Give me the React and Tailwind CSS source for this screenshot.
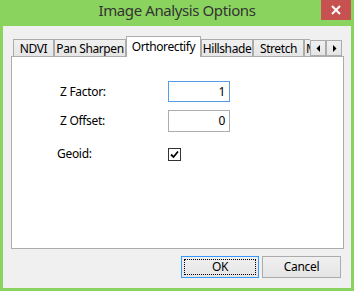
import React from "react";

const font = { fontFamily: '"Noto Sans", "Open Sans", sans-serif' };

function Tab({ label, w, selected, left }) {
  if (selected) {
    return (
      <div
        className="relative z-10 flex h-[21px] shrink-0 items-start justify-center border border-b-0 border-[#acacac] bg-white pt-[1px] text-[12px] tracking-[-0.4px] text-black"
        style={{ width: w }}
      >
        {label}
      </div>
    );
  }
  return (
    <div
      className={
        left
          ? "flex h-[18px] shrink-0 items-center justify-start overflow-hidden whitespace-nowrap border border-b-0 border-[#acacac] bg-gradient-to-b from-[#f0f0f0] to-[#e5e5e5] pl-[1px] text-[12px] tracking-[-0.4px] text-black"
          : "flex h-[18px] shrink-0 items-center justify-center overflow-hidden whitespace-nowrap border border-b-0 border-[#acacac] bg-gradient-to-b from-[#f0f0f0] to-[#e5e5e5] text-[12px] tracking-[-0.4px] text-black"
      }
      style={{ width: w }}
    >
      {label}
    </div>
  );
}

function ScrollBtn({ dir }) {
  return (
    <div className="flex h-[16px] w-[16px] items-center justify-center border border-[#acacac] bg-gradient-to-b from-[#f0f0f0] to-[#e5e5e5]">
      <svg width="5" height="7" viewBox="0 0 5 7">
        {dir === "left" ? (
          <polygon points="4,0 4,7 0.5,3.5" fill="#000" />
        ) : (
          <polygon points="1,0 1,7 4.5,3.5" fill="#000" />
        )}
      </svg>
    </div>
  );
}

export default function App() {
  return (
    <div
      className="flex h-[291px] w-[354px] flex-col bg-[#8bd35f]"
      style={font}
    >
      <div className="relative flex h-[26px] shrink-0 items-center justify-center">
        <span className="-mt-[5px] text-[15px] tracking-[-0.4px] text-[#333333]">
          Image Analysis Options
        </span>
        <div className="absolute right-[3px] top-0 flex h-[20px] w-[30px] items-center justify-center bg-[#c75050]">
          <svg width="10" height="10" viewBox="0 0 10 10">
            <path d="M1 1 L9 9 M9 1 L1 9" stroke="#fff" strokeWidth="2" />
          </svg>
        </div>
      </div>

      <div className="mx-[3px] mb-[3px] flex flex-1 flex-col bg-[#f0f0f0] pl-[8px] pr-[7px] pt-[10px]">
        <div className="flex items-end">
          <div className="flex w-[299px] items-end overflow-hidden pl-[2px]">
            <Tab label="NDVI" w={41} />
            <Tab label="Pan Sharpen" w={72} />
            <Tab label="Orthorectify" w={75} selected />
            <Tab label="Hillshade" w={52} />
            <Tab label="Stretch" w={51} />
            <Tab label="Mosaic" w={50} left />
          </div>
          <div className="mb-[1px] flex">
            <ScrollBtn dir="left" />
            <ScrollBtn dir="right" />
          </div>
        </div>

        <div className="-mt-px flex h-[193px] flex-col border border-[#acacac] bg-white pt-[24px] text-[12px] tracking-[-0.3px] text-black">
          <div className="flex h-[21px] items-center">
            <span className="ml-[48px] w-[108px]">Z Factor:</span>
            <div className="flex h-[21px] w-[62px] items-center justify-end border border-[#569de5] bg-white pr-[4px]">
              1
            </div>
          </div>
          <div className="mt-[8px] flex h-[22px] items-center">
            <span className="ml-[48px] w-[108px]">Z Offset:</span>
            <div className="flex h-[22px] w-[62px] items-center justify-end border border-[#abadb3] bg-white pr-[4px]">
              0
            </div>
          </div>
          <div className="mt-[15px] flex h-[14px] items-center">
            <span className="ml-[45px] w-[111px]">Geoid:</span>
            <div className="flex h-[13px] w-[13px] items-center justify-center border border-[#333333] bg-white">
              <svg width="9" height="9" viewBox="0 0 9 9">
                <path
                  d="M1 4.5 L3.5 7 L8 1.5"
                  stroke="#000"
                  strokeWidth="1.8"
                  fill="none"
                />
              </svg>
            </div>
          </div>
        </div>

        <div className="mt-[7px] flex justify-end gap-[3px] pr-[3px] text-[12px] tracking-[-0.3px]">
          <div className="flex h-[22px] w-[78px] items-center justify-center border border-[#3399ff] bg-gradient-to-b from-[#f0f0f0] to-[#e5e5e5] p-[2px]">
            <div className="flex h-full w-full items-center justify-center border border-dotted border-black text-black">
              OK
            </div>
          </div>
          <div className="flex h-[22px] w-[79px] items-center justify-center border border-[#acacac] bg-gradient-to-b from-[#f0f0f0] to-[#e5e5e5] text-black">
            Cancel
          </div>
        </div>
      </div>
    </div>
  );
}
